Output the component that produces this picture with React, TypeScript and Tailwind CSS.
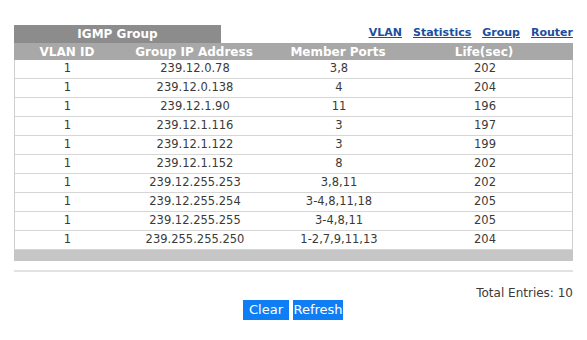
import React from "react"

const rows = [
  ["1", "239.12.0.78", "3,8", "202"],
  ["1", "239.12.0.138", "4", "204"],
  ["1", "239.12.1.90", "11", "196"],
  ["1", "239.12.1.116", "3", "197"],
  ["1", "239.12.1.122", "3", "199"],
  ["1", "239.12.1.152", "8", "202"],
  ["1", "239.12.255.253", "3,8,11", "202"],
  ["1", "239.12.255.254", "3-4,8,11,18", "205"],
  ["1", "239.12.255.255", "3-4,8,11", "205"],
  ["1", "239.255.255.250", "1-2,7,9,11,13", "204"],
]

const cols = "grid grid-cols-[106px_148px_140px_152px_1fr]"

export default function App() {
  return (
    <div className="h-[340px] w-[587px] bg-white pl-[14px] pr-[14px] pt-[25px] font-['DejaVu_Sans',sans-serif] text-[#3a3a3a]">
      {/* title + links */}
      <div className="flex h-[18px] items-end">
        <div className="flex h-[18px] w-[207px] items-center justify-center bg-[#8c8c8c] text-[12px] font-bold text-white">
          IGMP Group
        </div>
        <div className="ml-auto flex gap-[11px] pb-[2px] text-[11px] font-bold text-[#1d4e9e] underline">
          <a>VLAN</a>
          <a>Statistics</a>
          <a>Group</a>
          <a>Router</a>
        </div>
      </div>

      {/* header */}
      <div className={`${cols} h-[17px] items-center bg-[#a8a8a8] text-[12px] font-bold text-white`}>
        <div className="text-center">VLAN ID</div>
        <div className="text-center">Group IP Address</div>
        <div className="text-center">Member Ports</div>
        <div className="text-center">Life(sec)</div>
        <div />
      </div>

      {/* rows */}
      <div className="border-x border-[#cfcfcf]">
        {rows.map((r, i) => (
          <div key={i} className={`${cols} h-[19px] items-center border-b border-[#d6d6d6] text-[11.5px]`}>
            <div className="-ml-px text-center">{r[0]}</div>
            <div className="text-center">{r[1]}</div>
            <div className="text-center">{r[2]}</div>
            <div className="text-center">{r[3]}</div>
            <div />
          </div>
        ))}
      </div>
      <div className="h-[11px] bg-[#c6c6c6]" />

      <div className="mt-[9px] h-[2px] bg-[#e2e2e2]" />

      <div className="mt-[14px] text-right text-[12px] leading-[14px]">Total Entries: 10</div>

      <div className="mt-0 flex justify-center gap-[4px] pr-[1px] text-[13px] text-white">
        <button className="h-[20px] w-[46px] bg-[#0f7df4]">Clear</button>
        <button className="h-[20px] w-[50px] bg-[#0f7df4]">Refresh</button>
      </div>
    </div>
  )
}
